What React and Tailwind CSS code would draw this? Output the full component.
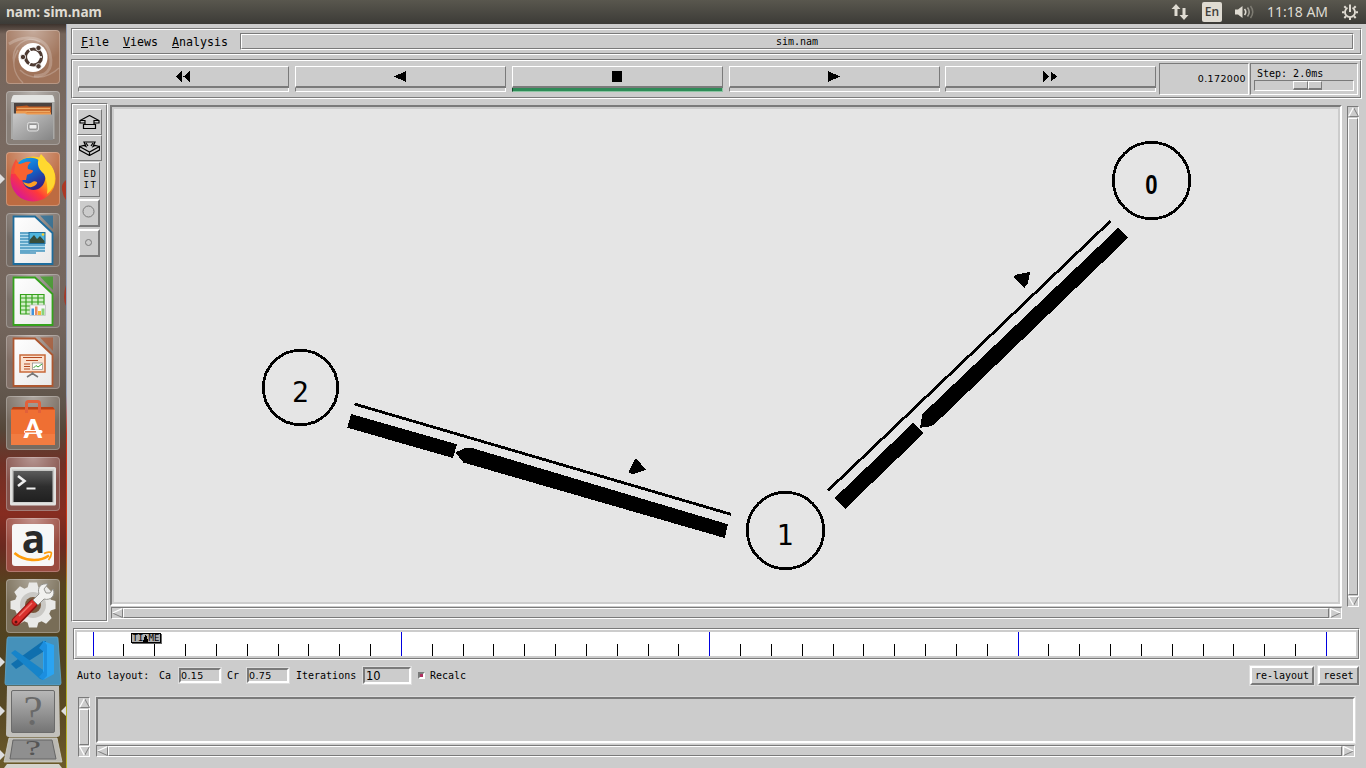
import React from "react";

const sunk = "border border-t-[#7a7a7a] border-l-[#7a7a7a] border-r-white border-b-white";
const raised = "border border-t-white border-l-white border-r-[#7a7a7a] border-b-[#7a7a7a]";
const mono10 = "font-['DejaVu_Sans_Mono',monospace] text-[10px] leading-3 whitespace-pre text-black";
const num10 = "font-['DejaVu_Sans',sans-serif] text-[9.5px] leading-3 tracking-[0.35px] whitespace-pre text-black";

function Groove({ className = "", inner = "", children }) {
  return (
    <div className={`shrink-0 ${sunk} ${className}`}>
      <div className={`h-full w-full ${raised} ${inner}`}>{children}</div>
    </div>
  );
}

const arrowPaths = {
  up: ["M0.5 10.5L5.5 0.5", "M5.5 0.5L10.5 10.5H0"],
  down: ["M10.5 0.5H0.5L5.5 10.5", "M5.5 10.5L10.5 0.5"],
  left: ["M10.5 0.5L0.5 5.5", "M0.5 5.5L10.5 10.5V0"],
  right: ["M0.5 10.5V0.5L10.5 5.5", "M10.5 5.5L0.5 10.5"],
};

function Arrow({ dir }) {
  const [light, dark] = arrowPaths[dir];
  return (
    <svg width="11" height="10" viewBox="0 0 11 11" className="shrink-0" fill="none" preserveAspectRatio="none">
      <path d={dark} stroke="#7a7a7a" />
      <path d={light} stroke="#fff" strokeWidth="1.3" />
    </svg>
  );
}

function HScroll({ className }) {
  return (
    <div className={`flex h-3 shrink-0 ${sunk} ${className}`}>
      <Arrow dir="left" />
      <div className={`mr-px h-full flex-1 ${raised}`} />
      <Arrow dir="right" />
    </div>
  );
}

function VScroll({ className }) {
  return (
    <div className={`flex w-3 shrink-0 flex-col items-center gap-px ${sunk} ${className}`}>
      <Arrow dir="up" />
      <div className={`w-full flex-1 ${raised}`} />
      <Arrow dir="down" />
    </div>
  );
}

const transportIcons = {
  rewind: "M6 0V11L0 5.5ZM13.5 0V11L7.5 5.5Z",
  back: "M13 0V11L1 5.5Z",
  stop: "M2 0H12V11H2Z",
  play: "M1 0V11L13 5.5Z",
  forward: "M0 0V11L6.5 5.5ZM7.5 0V11L14 5.5Z",
};

function TransportButton({ icon, className = "w-[211px]" }) {
  const active = icon === "stop";
  return (
    <div className={`flex shrink-0 flex-col ${className}`}>
      <div className="flex h-[22px] items-center justify-center border border-b-2 border-t-white border-l-white border-r-[#7a7a7a] border-b-[#7a7a7a] pr-px">
        <svg width="14" height="11" viewBox="0 0 14 11" shapeRendering="crispEdges">
          <path d={transportIcons[icon]} />
        </svg>
      </div>
      <div
        className={
          active
            ? "h-1 border border-t-0 border-l-[#17452d] border-r-[#8bc5a2] border-b-[#8bc5a2] bg-[#2e8b57]"
            : "h-1 border border-t-0 border-l-[#7a7a7a] border-r-white border-b-white"
        }
      />
    </div>
  );
}

/* ---------- launcher ---------- */

function Tile({ className, children }) {
  return (
    <div className={`h-[54px] w-[54px] shrink-0 rounded-[4px] border border-white/25 ${className}`}>
      <svg width="54" height="54" viewBox="0 0 54 54" className="-mt-px -ml-px overflow-visible">
        <defs>
          <radialGradient id="shine" cx="0.5" cy="0" r="0.65">
            <stop offset="0" stopColor="#fff" stopOpacity="0.4" />
            <stop offset="1" stopColor="#fff" stopOpacity="0" />
          </radialGradient>
        </defs>
        <rect width="54" height="54" rx="4" fill="url(#shine)" />
        {children}
      </svg>
    </div>
  );
}

function UbuntuIcon() {
  return (
    <>
      <g fill="none" stroke="#fff" strokeOpacity="0.22">
        <path d="M3 14C18 4 40 6 44 24S38 46 28 46" strokeWidth="3" />
        <path d="M8 34C4 16 20 4 34 12M17 53C6 42 6 30 12 20M53 38C40 50 24 50 14 40" strokeWidth="1.5" />
      </g>
      <circle cx="27" cy="27.500" r="14.500" fill="#fff" />
      <circle cx="27.500" cy="27" r="8" fill="none" stroke="#4d3a31" strokeWidth="3.2" />
      <g stroke="#fff" strokeWidth="1.3">
        <path d="M27.500 27L36 27M27.500 27L22.500 18M27.500 27L22.500 36" />
      </g>
      <circle cx="27.500" cy="27" r="5.800" fill="#fff" />
      <g fill="#4d3a31" stroke="#fff" strokeWidth="0.800">
        <circle cx="17" cy="27" r="2.700" />
        <circle cx="32.500" cy="18" r="2.700" />
        <circle cx="32.500" cy="36.300" r="2.700" />
      </g>
    </>
  );
}

function FilesIcon() {
  return (
    <>
      <defs>
        <linearGradient id="cab" x1="0" y1="0" x2="1" y2="1">
          <stop offset="0" stopColor="#c9c9c9" />
          <stop offset="1" stopColor="#858585" />
        </linearGradient>
      </defs>
      <path d="M8 4H46Q48 4 48.500 10V48H5V10Q6 4 8 4Z" fill="#a9a9a7" />
      <path d="M8 4H46Q48 4 48.500 11H5Q6 4 8 4Z" fill="#e4e4e2" />
      <path d="M8 12H46V25H8Z" fill="#4c4340" />
      <path d="M10 15.500L21 14.500 23 15.500H45V24H10Z" fill="#c25a20" />
      <path d="M11 17.500H44M11 20.500H44" stroke="#ecaa65" strokeWidth="1.300" />
      <path d="M10 20L19 20 21 21.500H45V25H10Z" fill="#ee9b50" />
      <path d="M7 22.500L19 22.500 21 23.500H47V49H7Z" fill="url(#cab)" />
      <rect x="21.500" y="31.500" width="11" height="8.500" rx="2" fill="#aaa" stroke="#ddd" />
      <rect x="23" y="33.500" width="8" height="4.500" rx="1" fill="#eee" stroke="#777" strokeWidth="0.700" />
    </>
  );
}

function FirefoxIcon() {
  return (
    <>
      <defs>
        <linearGradient id="ffx" x1="0.850" y1="0.100" x2="0.150" y2="0.900">
          <stop offset="0" stopColor="#ffe52e" />
          <stop offset="0.350" stopColor="#ffae12" />
          <stop offset="0.650" stopColor="#ff3a39" />
          <stop offset="1" stopColor="#d6169a" />
        </linearGradient>
        <linearGradient id="ffb" x1="0" y1="0" x2="0.500" y2="1">
          <stop offset="0" stopColor="#12a9f2" />
          <stop offset="0.550" stopColor="#1262c8" />
          <stop offset="1" stopColor="#31258a" />
        </linearGradient>
      </defs>
      <circle cx="27" cy="27" r="22.500" fill="url(#ffx)" />
      <path d="M5 22C5 15 8 11 10 7 11 10 13 12 16 12L12 22Z" fill="#f4503c" />
      <path d="M12 11C17 5 28 4 34 9 39 14 41 20 39 28 37 36 30 40 23 37 17 34 15 28 17 22Z" fill="url(#ffb)" />
      <path d="M10 9C12 13 15 12 17 11 20 9.500 23 9.500 25 10 22 12 21 15 22 17 24 18 28 18 27 19 27 21 23 22 21 23L20 28 14 28 8 20Z" fill="#f9622f" />
      <path d="M20 31C25 33 27 27 31 30 32 32 27 36 23 35 20 34 18 32 17 30Z" fill="#ff9f22" />
      <path d="M35 2C39 6 40 8 42 11 48 15 50 24 48 33 46 37 44 40 41 42 42 36 41 28 38 22 31 16 30 10 35 2Z" fill="#ffd82f" />
    </>
  );
}

function DocBase({ color, id }) {
  return (
    <>
      <defs>
        <linearGradient id={id} x1="0" y1="0" x2="1" y2="1">
          <stop offset="0" stopColor="#fff" />
          <stop offset="1" stopColor="#e9e9e9" />
        </linearGradient>
      </defs>
      <path d="M7.500 3.500H29L46.500 20V51H7.500Z" fill={`url(#${id})`} stroke={color} strokeWidth="1.800" />
      <path d="M34 2.500H47V16Z" fill={color} fillOpacity="0.7" />
    </>
  );
}

function WriterIcon() {
  return (
    <>
      <DocBase color="#1e6c9c" id="dw" />
      <rect x="14" y="19.500" width="10" height="20.500" fill="#b4dcee" />
      <rect x="24" y="31" width="15" height="7" fill="#b4dcee" />
      <path d="M14 20H23M14 23H23M14 26H23M14 29H23M14 32H39M14 35H39M14 38H39M14 40H30" stroke="#4695bf" strokeWidth="1.500" />
      <rect x="23" y="19.500" width="16" height="11" fill="#4fb4dc" stroke="#1e6c9c" />
      <path d="M23.500 30V27L28 22 31 26 34 23 38.500 28V30Z" fill="#394d3a" />
      <circle cx="37" cy="21.500" r="1.300" fill="#ffd02c" />
    </>
  );
}

function CalcIcon() {
  return (
    <>
      <DocBase color="#35a11c" id="dc" />
      <rect x="14" y="20" width="24" height="20" fill="#d2efc8" />
      <path d="M14 20.500H38M14 24H38M14 28H38M14 32H38M14 36H30M14 40H30M14.500 20V40M20 20V40M26 20V40M32 20V32M38 20V32" stroke="#35a11c" strokeWidth="1.200" />
      <rect x="24" y="31" width="15.500" height="10.500" fill="#f6f6f6" stroke="#bbb" strokeWidth="0.700" />
      <path d="M25.500 41V34.500H28V41Z" fill="#3f93dc" />
      <path d="M29 41V32.500H31.500V41Z" fill="#e98a62" />
      <path d="M32 41V37H35V41Z" fill="#f3b83b" />
      <path d="M35.500 41V34.500H38.500V41Z" fill="#8ad27a" />
    </>
  );
}

function ImpressIcon() {
  return (
    <>
      <DocBase color="#ad5730" id="di" />
      <rect x="14" y="20" width="25" height="17" fill="#fbe1cf" stroke="#c8693a" strokeWidth="1.500" />
      <path d="M17 22.500H36M20 25.500H32M18 29H24M18 31.500H24M18 34H24" stroke="#b4491f" />
      <rect x="26.500" y="28" width="10" height="6.500" fill="#fff" stroke="#888" strokeWidth="0.700" />
      <path d="M27.500 33L30 30.500 32 32 36 29" fill="none" stroke="#3ba432" />
      <path d="M26.500 37V39M21 42L26.500 38.500 32 42" fill="none" stroke="#777" strokeWidth="1.500" />
    </>
  );
}

function SoftwareIcon() {
  return (
    <>
      <path d="M7 11H47L49 14H5Z" fill="#b94116" />
      <rect x="5" y="13.500" width="44" height="35.500" fill="#ef6f33" />
      <rect x="5" y="38" width="44" height="11" fill="#f27c41" />
      <path d="M20.500 17V7.500Q20.500 5.500 22.500 5.500H31.500Q33.500 5.500 33.500 7.500V17" fill="none" stroke="#e2603a" strokeWidth="3" />
      <text x="27" y="42" textAnchor="middle" className="font-['Lato',sans-serif] text-[26px] font-black" fill="#fff">A</text>
      <rect x="18" y="34" width="18.500" height="3.600" rx="1.800" fill="#fff" />
      <path d="M19 35.800H30" stroke="#ef6f33" strokeWidth="1.400" />
    </>
  );
}

function TerminalIcon() {
  return (
    <>
      <defs>
        <linearGradient id="scr" x1="0" y1="0" x2="0" y2="1">
          <stop offset="0" stopColor="#5b5b5b" />
          <stop offset="0.500" stopColor="#2e2e2e" />
          <stop offset="1" stopColor="#202020" />
        </linearGradient>
      </defs>
      <rect x="4" y="10" width="46" height="38.500" rx="1.500" fill="#e1e1df" />
      <rect x="6" y="12.500" width="42" height="33" fill="#c6c6c4" />
      <rect x="7.500" y="14" width="39" height="31" fill="url(#scr)" />
      <path d="M12 19L18.500 24 12 29" fill="none" stroke="#eee" strokeWidth="2.600" />
      <path d="M20.500 31.500H29.500" stroke="#eee" strokeWidth="2" />
    </>
  );
}

function AmazonIcon() {
  return (
    <>
      <rect x="6" y="6" width="42" height="42" rx="3" fill="#f7f7f7" />
      <text x="27.500" y="34.500" textAnchor="middle" className="font-['Open_Sans',sans-serif] text-[39px] font-bold" fill="#2a2a2a">a</text>
      <path d="M8.500 35C18 43.500 34 44 43 37.500" fill="none" stroke="#ff9d0c" strokeWidth="2.600" />
      <path d="M38 35.500C41 34 45 33.500 45.500 35 45.500 37 44 40 42.500 42" fill="none" stroke="#ff9d0c" strokeWidth="1.600" />
    </>
  );
}

function SettingsIcon() {
  const teeth = [0, 45, 90, 135, 180, 225, 270, 315];
  return (
    <>
      <g fill="#e9e9e7">
        {teeth.map((a) => (
          <path key={a} d="M21.500 9L23 3.500H31L32.500 9Z" transform={`rotate(${a} 27 26)`} />
        ))}
        <circle cx="27" cy="26" r="18.500" />
      </g>
      <circle cx="27" cy="26" r="13" fill="#c9c8c4" />
      <circle cx="27" cy="26" r="8" fill="#77583c" />
      <path d="M10 42.500L27 25" stroke="#8c1512" strokeWidth="9" strokeLinecap="round" />
      <path d="M10 42L27.500 24" stroke="#d9302c" strokeWidth="6.500" strokeLinecap="round" />
      <path d="M13 37L26 24" stroke="#f0746c" strokeWidth="1.500" />
      <circle cx="10" cy="43" r="1.500" fill="#5c1210" />
      <path d="M27 21L33 15C31 8 35 4 42 5L38 10 40 14 44 14 47 10C50 16 45 22 38 20L32 26Z" fill="#f1f1ef" stroke="#8c8c88" strokeWidth="0.900" />
    </>
  );
}

const tiles = [
  ["ubuntu", "bg-[#a0745b]", UbuntuIcon],
  ["files", "bg-[#887f78]", FilesIcon],
  ["firefox", "bg-[#bd6b41]", FirefoxIcon],
  ["writer", "bg-[#756b64]", WriterIcon],
  ["calc", "bg-[#7b716a]", CalcIcon],
  ["impress", "bg-[#827067]", ImpressIcon],
  ["software", "bg-[#776b60]", SoftwareIcon],
  ["terminal", "bg-[#85514a]", TerminalIcon],
  ["amazon", "bg-[#9a4b40]", AmazonIcon],
  ["settings", "bg-[#786d57]", SettingsIcon],
];

function Launcher() {
  return (
    <div className="relative flex h-full w-[66px] shrink-0 flex-col items-center overflow-hidden bg-[linear-gradient(180deg,#3d332d_0px,#75645a_10px,#796a61_120px,#73655c_300px,#5f544a_380px,#554739_405px,#703025_440px,#862c20_490px,#6b2920_522px,#56421f_560px,#4f4322_640px,#5d4c24_700px,#6c5b2a_744px)] pt-1.5">
      <div className="flex flex-col gap-[7px]">
        {tiles.map(([name, tint, Icon]) => (
          <Tile key={name} className={tint}>
            <Icon />
          </Tile>
        ))}
      </div>
      <svg width="66" height="135" viewBox="0 633 66 135" className="shrink-0">
        <defs>
          <linearGradient id="qa" x1="0" y1="0" x2="0" y2="1">
            <stop offset="0" stopColor="#b8b8b8" />
            <stop offset="1" stopColor="#747474" />
          </linearGradient>
        </defs>
        <path d="M8 637H57Q58 637 58 639L61 683Q61 685 59 685H7Q5 685 5 683L7 639Z" fill="#4591ba" stroke="#62a7cb" strokeWidth="0.800" />
        <path d="M11 664L16 669 46 650V641L43 641Z" fill="#0f6fae" />
        <path d="M11 653L15 650 46 672 44 680 40 679Z" fill="#1684ca" />
        <path d="M43 641L54 645V674L43 680Z" fill="#2aa4f2" />
        <path d="M44 641L47 645V676L43 680 39 677 44 671V652L39 648Z" fill="#1c8fe0" />
        <path d="M7 686H59L60 734Q60 737 57 737H9Q6 737 6 734Z" fill="#c2c0bb" />
        <rect x="11.500" y="690.500" width="43" height="42" rx="1.500" fill="url(#qa)" stroke="#6b6b6b" />
        <text x="33" y="725" textAnchor="middle" className="font-['Liberation_Serif',serif] text-[43px]" fill="#696969">?</text>
        <path d="M9 738H57L62 762H4Z" fill="#bbb9b3" stroke="#d1d0ca" strokeWidth="0.800" />
        <path d="M13 740H52L56 759H10Z" fill="#8f8f8f" stroke="#666" />
        <text transform="translate(33 755) scale(1 0.600)" textAnchor="middle" className="font-['Liberation_Serif',serif] text-[36px]" fill="#555">?</text>
        <path d="M7 764H59L62 768H4Z" fill="#d4d3ce" />
        <path d="M0 657L5 662 0 667ZM0 706L5 711 0 716ZM0 750L5 755 0 760ZM66 706L61 711 66 716Z" fill="#dedede" />
      </svg>
      <svg width="66" height="744" viewBox="0 24 66 744" className="pointer-events-none absolute top-0 left-0">
        <path d="M0 174L5 179 0 184Z" fill="#dedede" />
        <path d="M66 180Q61 184 62 190T66 200Z" fill="#ac3824" />
        <path d="M66 285Q62 298 66 306Z" fill="#a33a28" />
      </svg>
    </div>
  );
}

/* ---------- top bar ---------- */

function TopBar() {
  return (
    <div className="flex h-6 items-center justify-between bg-[linear-gradient(#59574e,#3c3b37)] pl-1.5 text-[#dfdbd2]">
      <span className="font-['Noto_Sans',sans-serif] text-[13.6px] leading-6 font-bold">nam: sim.nam</span>
      <div className="flex items-center pr-2">
        <svg width="18" height="16" viewBox="0 0 18 16" fill="#dfdbd2">
          <path d="M5 0L9.500 5H6.500V12H3.500V5H0.500Z" />
          <path d="M13 16L17.500 11H14.500V4H11.500V11H8.500Z" />
        </svg>
        <div className="ml-[13px] flex h-5 w-5 items-center justify-center rounded-[2px] bg-[#dfdbd2] font-['Open_Sans',sans-serif] text-[12px] font-semibold text-[#3f3e39]">
          En
        </div>
        <svg width="20" height="16" viewBox="0 0 20 16" className="ml-[13px]" fill="none">
          <path d="M0 5.500H3L7.500 2V14L3 10.500H0Z" fill="#dfdbd2" />
          <path d="M9.500 5Q12 8 9.500 11" stroke="#dfdbd2" strokeWidth="1.600" />
          <path d="M12.500 3.500Q16 8 12.500 12.500" stroke="#a19e95" strokeWidth="1.600" />
          <path d="M15.500 2Q20 8 15.500 14" stroke="#7e7c73" strokeWidth="1.500" />
        </svg>
        <span className="ml-[12px] w-[63px] font-['Noto_Sans',sans-serif] text-[14px] leading-6 whitespace-nowrap">11:18 AM</span>
        <svg width="16" height="16" viewBox="0 0 16 16" className="ml-3" fill="none" stroke="#dfdbd2">
          <path d="M5.500 3.800A5 5 0 1 0 10.500 3.800" strokeWidth="1.800" />
          <path d="M8 0.500V8" strokeWidth="2" />
          <path d="M2.300 2.300L4 4M13.700 2.300L12 4M0 8.300H2.500M13.500 8.300H16M2.300 14L4 12.300M13.700 14L12 12.300M8 13.500V16" strokeWidth="2" />
        </svg>
      </div>
    </div>
  );
}

/* ---------- nam window ---------- */

function MenuItem({ label }) {
  return (
    <span>
      <span className="underline decoration-1 underline-offset-1">{label[0]}</span>
      {label.slice(1)}
    </span>
  );
}

function Tools() {
  return (
    <Groove className="h-[519px] w-[37px]" inner="flex flex-col pt-1 pl-1">
      <div className={`flex h-[26px] w-[25px] items-center justify-center ${raised}`}>
        <svg width="21" height="14" viewBox="0 0 21 14" fill="none" stroke="#000" strokeWidth="1.200">
          <path d="M10.500 0.500L20 5.500V8H15.500M10.500 0.500L1 5.500V8H5.500M1 5.500H6V9.500M20 5.500H15V9.500M4.500 9.500H16.500V13.500H4.500Z" />
        </svg>
      </div>
      <div className={`flex h-[26px] w-[25px] items-center justify-center ${raised}`}>
        <svg width="21" height="15" viewBox="0 0 21 15" fill="none" stroke="#000" strokeWidth="1.200">
          <path d="M0.500 5.500L10.500 11 20.500 5.500V9L10.500 14.500 0.500 9ZM0.500 5.500L5 4.500 7 5.500 5 1H16L14 5.500 16 4.500 20.500 5.500M7 2L9 5M14 2L12 5M10.500 11V14" />
        </svg>
      </div>
      <div className={`mt-px ml-0.5 flex h-[35px] w-[21px] flex-col items-center justify-center font-['DejaVu_Sans_Mono',monospace] text-[9px] leading-[11px] tracking-[1.7px] ${raised}`}>
        <span className="pl-0.5">ED</span>
        <span className="pl-0.5">IT</span>
      </div>
      <div className="mt-0.5 ml-px flex h-7 w-[22px] items-center justify-center border-2 border-t-white border-l-white border-r-[#7a7a7a] border-b-[#7a7a7a]">
        <svg width="13" height="13" className="-mt-1 -ml-0.5" fill="none" stroke="#7a7a7a">
          <circle cx="6.500" cy="6.500" r="5.500" />
        </svg>
      </div>
      <div className="mt-0.5 ml-px flex h-7 w-[22px] items-center justify-center border-2 border-t-white border-l-white border-r-[#7a7a7a] border-b-[#7a7a7a]">
        <svg width="7" height="7" className="-mt-0.5 -ml-px" fill="none" stroke="#7a7a7a">
          <circle cx="3.500" cy="3.500" r="3" />
        </svg>
      </div>
    </Groove>
  );
}

function Network() {
  return (
    <div className="h-[501px] w-[1232px] border-2 border-t-[#7a7a7a] border-l-[#7a7a7a] border-r-white border-b-white">
      <div className="h-full w-full border-2 border-[#cccccc] bg-[#e5e5e5]">
        <svg width="1224" height="493" viewBox="114 109 1224 493" shapeRendering="crispEdges">
          <g fill="none" stroke="#000" strokeWidth="2.800">
            <circle cx="1151.500" cy="180.500" r="38.200" />
            <circle cx="785.500" cy="530.500" r="38.200" />
            <circle cx="300.500" cy="387.500" r="37.200" />
            <path d="M354.500 404L731 514.300M828 490.500L1110.500 221" strokeWidth="2.800" />
          </g>
          <path d="M351 414L457 444.300 453 458 347.300 427.700Z" />
          <path d="M455.500 452.300L466 447.700 472 448 728 524.300 724.700 538 463.300 462.500Z" />
          <path d="M635 459H637L646 470 633 474 628.300 473Z" />
          <path d="M1118.300 227.700L1128.300 237.700 934 424.700 929 426.700 920 427.700 922.500 414Z" />
          <path d="M913.300 422.700L923.700 433.300 845 509 834.300 498.300Z" />
          <path d="M1013 277L1017 274.500 1030 272 1028 283.300 1024.300 288Z" />
          <g textAnchor="middle" className="font-['DejaVu_Sans_Mono',monospace] text-[28px]">
            <text x="300.500" y="402">2</text>
            <text x="785" y="545">1</text>
          </g>
          <text transform="translate(1151.500 194) scale(0.820 1)" textAnchor="middle" className="font-['Liberation_Sans',sans-serif] text-[27px] font-bold">0</text>
        </svg>
      </div>
    </div>
  );
}

function Timeline() {
  const ticks = Array.from({ length: 41 }, (_, i) => i);
  return (
    <Groove className="ml-1.5 h-8 w-[1287px]" inner="p-0.5">
      <svg width="1279" height="24" viewBox="77 632 1279 24" className="bg-white" shapeRendering="crispEdges">
        {ticks.map((i) => {
          const major = i % 10 === 0;
          return (
            <rect
              key={i}
              x={93 + Math.floor(30.835 * i)}
              y={major ? 632 : 644}
              width="1"
              height={major ? 24 : 12}
              fill={major ? "#0000e0" : "#000"}
            />
          );
        })}
        <rect x="132" y="634" width="30" height="10" fill="#666" />
        <rect x="131" y="633" width="30" height="10" fill="#000" />
        <rect x="132" y="634" width="28" height="8" fill="#b0b0b0" />
        <text y="641" className="font-['DejaVu_Sans_Mono',monospace] text-[9px]">
          <tspan x="132.500">TI</tspan>
          <tspan x="148.500">ME</tspan>
        </text>
        <path d="M145 635H146L149 643H142.500Z" />
      </svg>
    </Groove>
  );
}

function Entry({ className, children }) {
  return (
    <div className={`shrink-0 border border-[#dddddd] ${className}`}>
      <div className="flex h-full w-full items-center border-2 border-t-[#7a7a7a] border-l-[#7a7a7a] border-r-white border-b-white">{children}</div>
    </div>
  );
}

function PushButton({ className, children }) {
  return (
    <div className={`h-[21px] shrink-0 border border-[#dddddd] ${className}`}>
      <div className={`flex h-full w-full items-center justify-center border-2 border-t-white border-l-white border-r-[#7a7a7a] border-b-[#7a7a7a] ${mono10}`}>{children}</div>
    </div>
  );
}

function LayoutControls() {
  return (
    <div className={`mt-[5px] flex h-[21px] w-[1293px] items-center pl-[10px] ${mono10}`}>
      <span className="w-[82px]">Auto layout:</span>
      <span className="w-[19px]">Ca</span>
      <Entry className="h-[17px] w-[44px]"><span className={num10}>0.15</span></Entry>
      <span className="ml-[5px] w-[19px]">Cr</span>
      <Entry className="h-[17px] w-[44px]"><span className={num10}>0.75</span></Entry>
      <span className="ml-[6px] w-[66px]">Iterations</span>
      <Entry className="h-[19px] w-[50px]">
        <span className="pl-px font-['DejaVu_Sans',sans-serif] text-[11.500px] leading-3">10</span>
      </Entry>
      <div className="ml-[6px] h-[7px] w-[7px] border-2 border-t-[#7a7a7a] border-l-[#7a7a7a] border-r-white border-b-white bg-[#b03060]" />
      <span className="ml-[5px]">Recalc</span>
      <PushButton className="ml-auto w-[66px]">re-layout</PushButton>
      <PushButton className="ml-0.5 w-[43px]">reset</PushButton>
    </div>
  );
}

export default function App() {
  return (
    <div className="h-[768px] w-[1366px] overflow-hidden bg-[#cccccc]">
      <TopBar />
      <div className="flex h-[744px]">
        <Launcher />
        <div className="w-px shrink-0 bg-[linear-gradient(180deg,#97a4bb_0px,#97a4bb_370px,#d0331a_410px,#c93a1a_520px,#a3a02a_570px,#bcb52c_744px)]" />
        <div className="flex flex-1 flex-col pt-1">
          <Groove
            className="ml-1 h-[27px] w-[1291px]"
            inner="flex items-center gap-[14px] pl-2 font-['DejaVu_Sans_Mono',monospace] text-[11.630px] leading-4 text-black"
          >
            <MenuItem label="File" />
            <MenuItem label="Views" />
            <MenuItem label="Analysis" />
            <Groove className="-ml-[2px] h-[17px] w-[1114px]" inner={`pt-px text-center ${mono10}`}>
              sim.nam
            </Groove>
          </Groove>

          <Groove className="mt-1 ml-1 h-10 w-[1291px]" inner="flex pt-0.5 pl-[5px]">
            <div className="flex gap-1.5 pt-[3px]">
              <TransportButton icon="rewind" />
              <TransportButton icon="back" />
              <TransportButton icon="stop" />
              <TransportButton icon="play" />
              <TransportButton icon="forward" className="-ml-px w-[211px]" />
            </div>
            <div className={`ml-[3px] flex h-8 w-[90px] shrink-0 items-center justify-end pr-0.5 ${sunk} ${num10}`}>0.172000</div>
            <div className={`ml-px h-8 w-[108px] shrink-0 pt-1 pl-[3px] ${sunk}`}>
              <div className={`pl-[3px] ${mono10}`}>Step: 2.0ms</div>
              <div className={`h-[11px] w-[100px] pl-[38px] ${sunk}`}>
                <div className="flex h-[9px] w-[29px]">
                  <div className="flex-1 border border-b-2 border-t-white border-l-white border-r-[#7a7a7a] border-b-[#7a7a7a]" />
                  <div className="flex-1 border border-b-2 border-t-white border-l-white border-r-[#7a7a7a] border-b-[#7a7a7a]" />
                </div>
              </div>
            </div>
          </Groove>

          <div className="mt-1 ml-1 flex h-[525px]">
            <Tools />
            <div className="ml-0.5 pt-0.5">
              <Network />
              <HScroll className="mt-px ml-px w-[1231px]" />
            </div>
            <VScroll className="mt-[3px] ml-[5px] h-[501px]" />
          </div>

          <Timeline />
          <LayoutControls />

          <div className="mt-[11px] ml-[11px] flex">
            <VScroll className="h-[60px]" />
            <div className="-mt-px ml-[5px]">
              <div className="h-12 w-[1261px] border border-[#dddddd]">
                <div className="h-full w-full border-2 border-t-[#7a7a7a] border-l-[#7a7a7a] border-r-white border-b-white" />
              </div>
              <HScroll className="mt-px ml-px w-[1259px]" />
            </div>
          </div>
        </div>
      </div>
    </div>
  );
}
